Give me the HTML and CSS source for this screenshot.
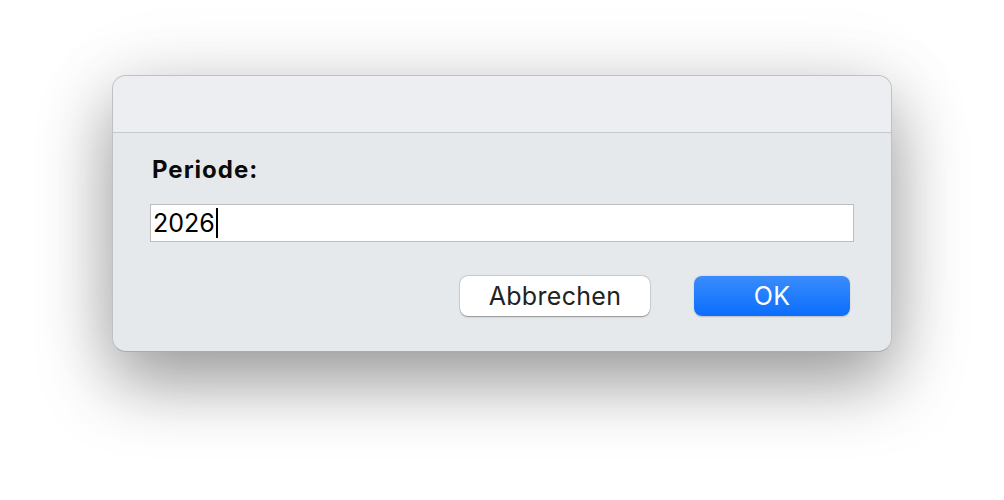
FILE: index.html
```html
<!DOCTYPE html>
<html lang="de">
<head>
<meta charset="utf-8">
<link rel="stylesheet" href="styles.css">
</head>
<body>
<div class="dialog">
  <div class="titlebar"></div>
  <div class="content">
    <div class="label">Periode:</div>
    <div class="input"><span class="value">2026</span><span class="caret"></span></div>
    <div class="buttons">
      <button class="btn btn-cancel">Abbrechen</button>
      <button class="btn btn-ok">OK</button>
    </div>
  </div>
</div>
</body>
</html>
```
FILE: styles.css
```css
html, body {
  margin: 0;
  padding: 0;
  background: #ffffff;
  width: 1004px;
  height: 500px;
  overflow: hidden;
}
body {
  padding: 75px 0 0 112px;
  box-sizing: border-box;
  font-family: Inter, "Liberation Sans", Arial, sans-serif;
}
.dialog {
  width: 780px;
  height: 277px;
  box-sizing: border-box;
  border: 1px solid #bfc1c4;
  border-bottom-color: #a9abae;
  border-radius: 14px;
  background: #e6e9ec;
  overflow: hidden;
  box-shadow: 0 30px 70px rgba(0, 0, 0, 0.38), 0 0 90px rgba(0, 0, 0, 0.07);
  display: flex;
  flex-direction: column;
}
.titlebar {
  height: 56px;
  background: #eceef1;
  border-bottom: 1px solid #c6c8cb;
  flex: none;
}
.content {
  padding: 24px 37px 0 37px;
  display: flex;
  flex-direction: column;
}
.label {
  font-weight: 700;
  font-size: 24px;
  line-height: 26px;
  letter-spacing: 1px;
  color: #0a0a0a;
  padding-left: 2px;
}
.input {
  margin-top: 21px;
  height: 38px;
  box-sizing: border-box;
  background: #fff;
  border: 1px solid #bdbdbd;
  display: flex;
  align-items: center;
  padding-left: 2px;
}
.value {
  font-size: 25px;
  color: #000;
  line-height: 30px;
}
.caret {
  width: 2px;
  height: 30px;
  background: #000;
  margin-left: 1px;
}
.buttons {
  margin-top: 34px;
  display: flex;
  justify-content: flex-end;
  gap: 44px;
  padding-right: 4px;
}
.btn {
  height: 40px;
  border-radius: 8px;
  font-family: Inter, "Liberation Sans", Arial, sans-serif;
  font-size: 25px;
  letter-spacing: 0.3px;
  padding: 0;
  cursor: default;
}
.btn-cancel {
  width: 190px;
  background: #fff;
  color: #222;
  border: none;
  box-shadow: 0 0.5px 1.5px rgba(0, 0, 0, 0.35), 0 0 0 0.5px rgba(0, 0, 0, 0.12);
}
.btn-ok {
  width: 156px;
  background: linear-gradient(#3a8cfb, #0a6efd);
  color: #fff;
  border: none;
  box-shadow: 0 0.5px 1.5px rgba(0, 0, 0, 0.2);
}
```
